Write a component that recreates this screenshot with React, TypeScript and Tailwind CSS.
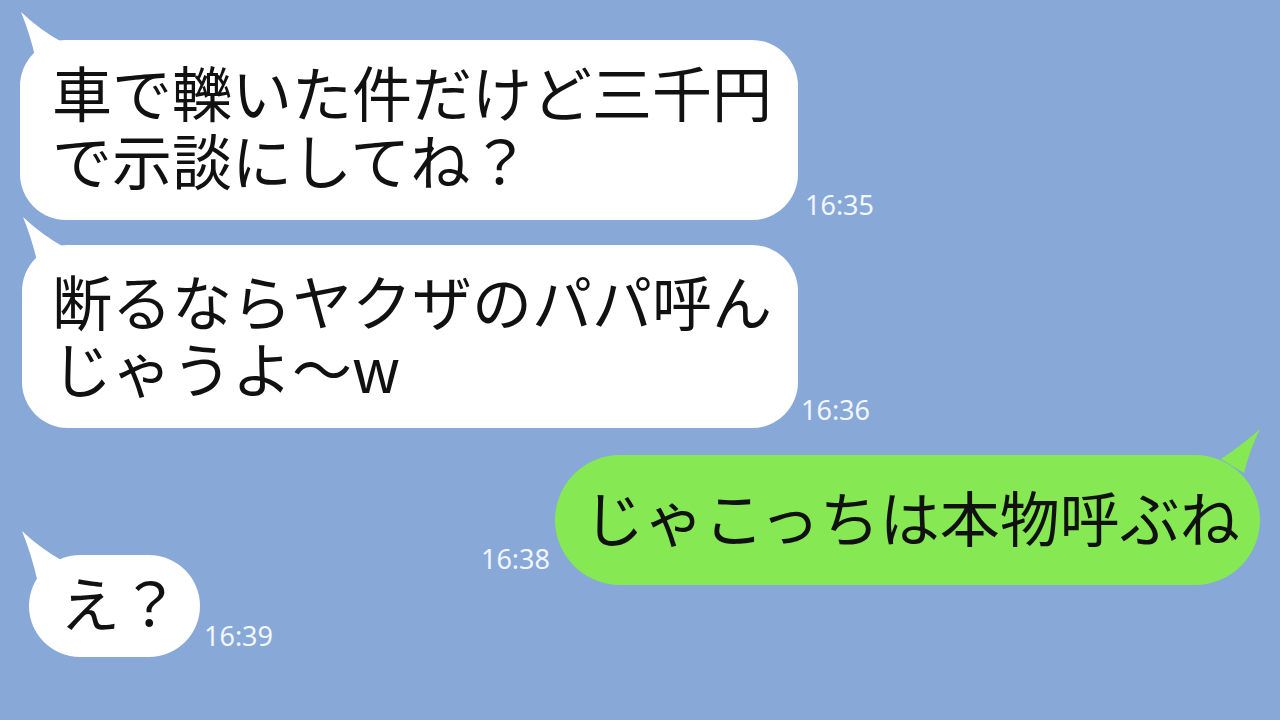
import React from 'react';

const jp = { fontFamily: '"Noto Sans CJK JP", "Noto Sans", sans-serif' };
const ts = { fontFamily: '"Noto Sans", "Liberation Sans", sans-serif' };

function LeftTail({ className }: { className: string }) {
  return (
    <svg className={`absolute ${className}`} width="46" height="50" viewBox="0 0 46 50">
      <path d="M1 0 Q20 18 42 30 L16 48 Q10 22 1 0 Z" fill="#ffffff" />
    </svg>
  );
}

function RightTail() {
  return (
    <svg className="absolute right-0 top-[-26px]" width="42" height="46" viewBox="0 0 42 46">
      <path d="M42 0 Q24 16 3 30 L26 44 Q32 20 42 0 Z" fill="#86e852" />
    </svg>
  );
}

function Time({ t, className }: { t: string; className: string }) {
  return (
    <span style={ts} className={`text-[27px] leading-none text-[#f2f6ff] ${className}`}>
      {t}
    </span>
  );
}

export default function App() {
  return (
    <div className="w-full h-[720px] bg-[#88a8d8] overflow-hidden flex flex-col text-[#111111]" style={jp}>
      <div className="flex items-end mt-[40px] ml-[20px]">
        <div className="relative w-[778px] h-[180px] bg-white rounded-[46px] pl-[32px] pt-[17px]">
          <LeftTail className="left-0 top-[-28px]" />
          <p className="text-[60px] leading-[68px] whitespace-nowrap">
            車で轢いた件だけど三千円<br />で示談にしてね？
          </p>
        </div>
        <Time t="16:35" className="ml-[7px] mb-[2px]" />
      </div>

      <div className="flex items-end mt-[25px] ml-[22px]">
        <div className="relative w-[776px] h-[183px] bg-white rounded-[46px] pl-[30px] pt-[21px]">
          <LeftTail className="left-0 top-[-28px]" />
          <p className="text-[60px] leading-[67px] whitespace-nowrap">
            断るならヤクザのパパ呼ん<br />じゃうよ～w
          </p>
        </div>
        <Time t="16:36" className="ml-[3px] mb-[5px]" />
      </div>

      <div className="flex items-end justify-end mt-[27px] mr-[20px]">
        <Time t="16:38" className="mr-[5px] mb-[13px]" />
        <div className="relative w-[705px] h-[130px] bg-[#86e852] rounded-[65px] pl-[29px] pb-[8px] flex items-center">
          <RightTail />
          <p className="text-[60px] leading-[68px] whitespace-nowrap">じゃこっちは本物呼ぶね</p>
        </div>
      </div>

      <div className="flex items-end mt-[-30px] ml-[29px]">
        <div className="relative w-[171px] h-[102px] bg-white rounded-[51px] pl-[31px] pb-[10px] flex items-center">
          <LeftTail className="left-[-8px] top-[-24px]" />
          <p className="text-[60px] leading-[68px] whitespace-nowrap">え？</p>
        </div>
        <Time t="16:39" className="ml-[4px] mb-[8px]" />
      </div>
    </div>
  );
}
